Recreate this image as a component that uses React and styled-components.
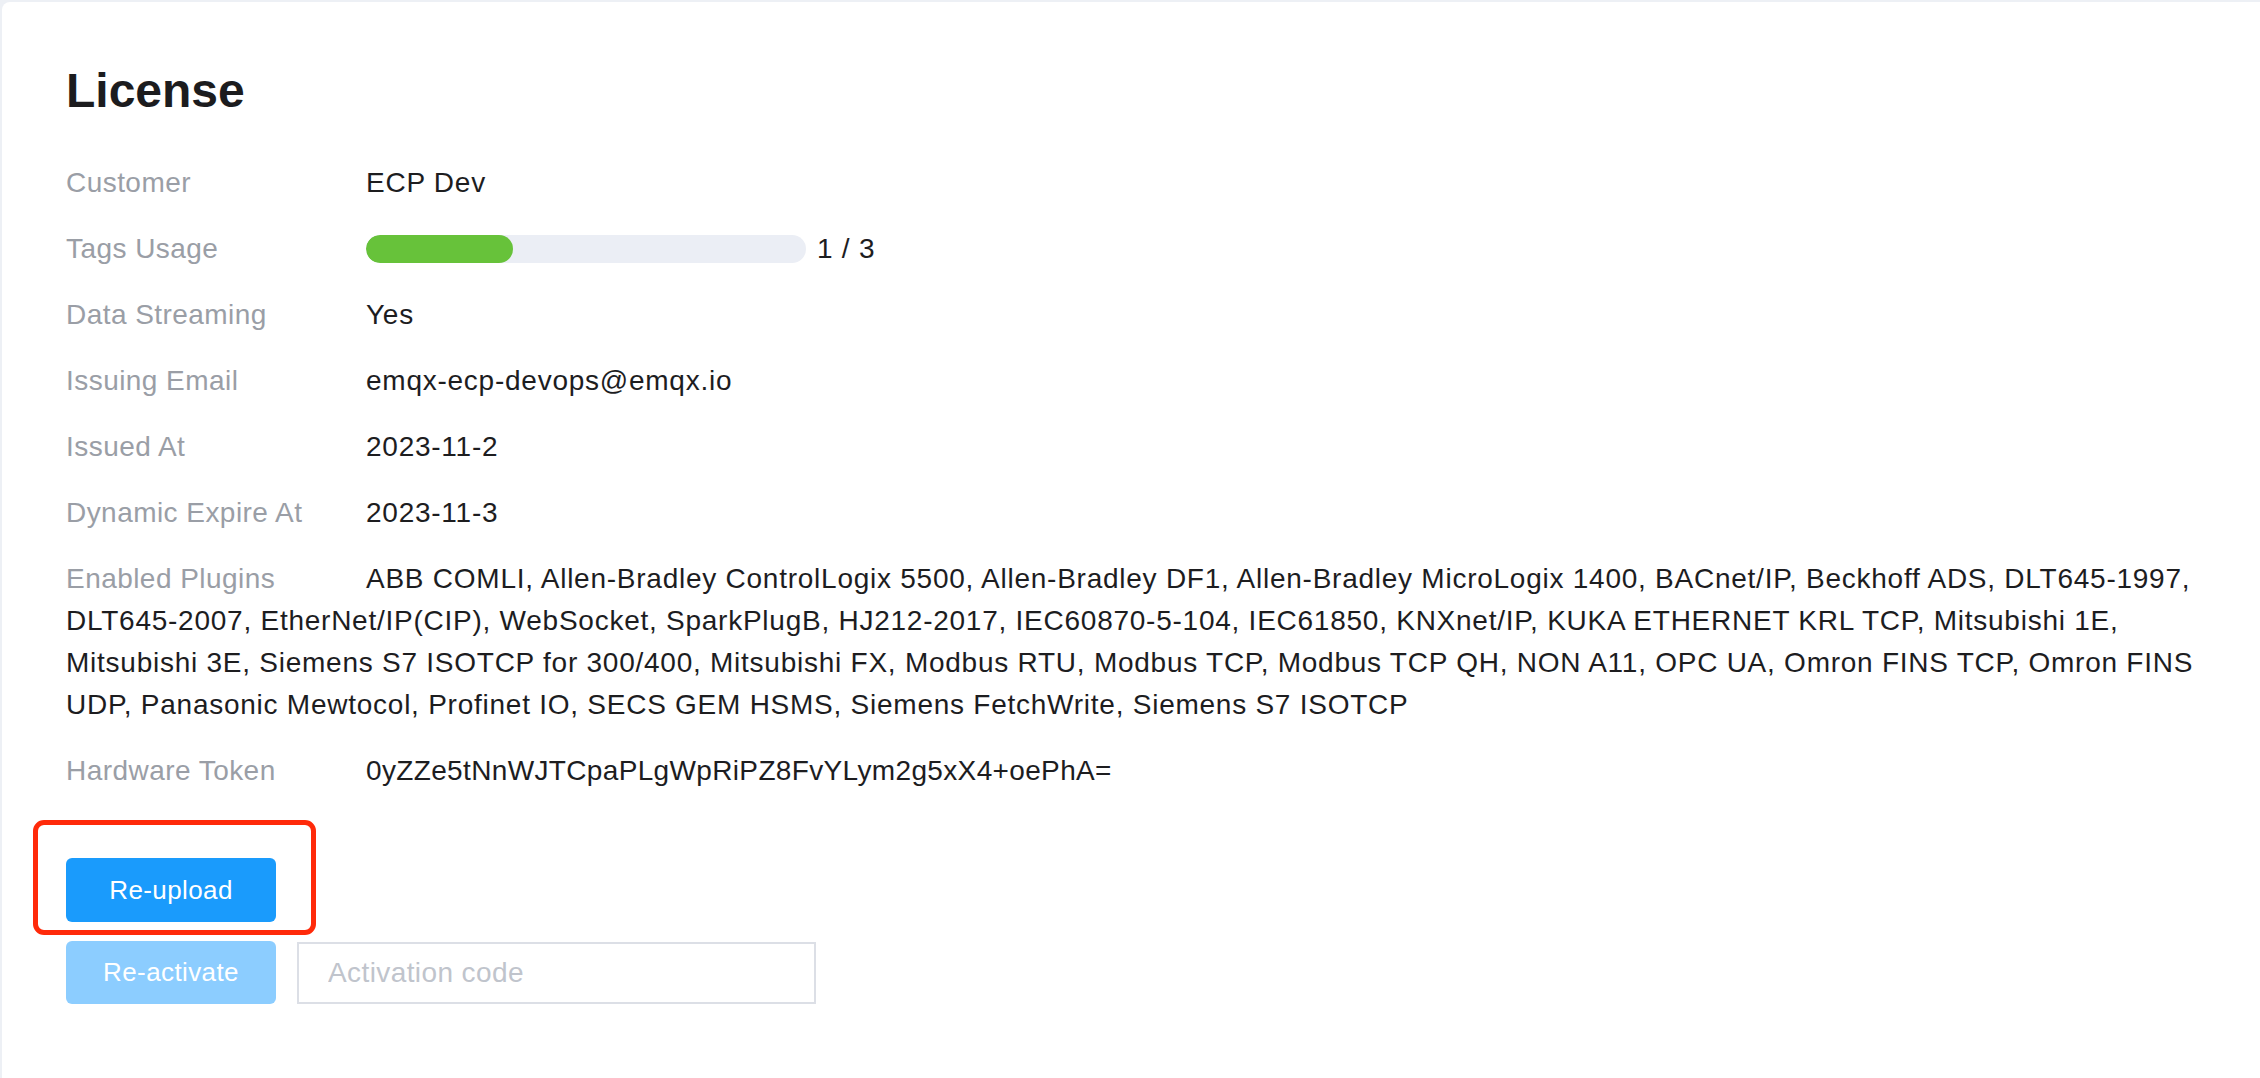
import React from 'react';
import styled, { createGlobalStyle } from 'styled-components';

const GlobalStyle = createGlobalStyle`
  html, body {
    margin: 0;
    padding: 0;
    background: #edf0f5;
  }
  body {
    font-family: "Liberation Sans", Arial, "Noto Sans CJK SC", sans-serif;
    color: #1d1d1f;
  }
  * {
    box-sizing: border-box;
  }
`;

const Page = styled.div`
  min-height: 100vh;
  padding: 2px 0 0 2px;
  display: flex;
`;

const Card = styled.section`
  flex: 1;
  background: #fff;
  border-radius: 8px 0 0 0;
  padding: 53px 45px 60px 64px;
`;

const Title = styled.h1`
  margin: 0 0 35px;
  font-size: 48px;
  line-height: 72px;
  font-weight: 600;
  color: #1c1c1e;
`;

const InfoList = styled.div`
  font-size: 28px;
  line-height: 42px;
`;

// label sits inline so long values wrap back under it
const InfoRow = styled.div`
  margin-bottom: 24px;
  display: ${(p) => (p.$flex ? 'flex' : 'block')};
  align-items: center;

  &:last-child {
    margin-bottom: 0;
  }
`;

const Label = styled.span`
  display: inline-block;
  width: 300px;
  flex: none;
  color: #9a9ea6;
  letter-spacing: 0.45px;
`;

const Value = styled.span`
  color: #1d1d1f;
  letter-spacing: ${(p) => (p.$tight ? 0.35 : 0.75)}px;
`;

const Track = styled.div`
  width: 440px;
  height: 28px;
  margin-right: 11px;
  border-radius: 14px;
  background: #ebeef5;
  overflow: hidden;
`;

const Fill = styled.div`
  height: 100%;
  border-radius: 14px;
  background: #67c23a;
`;

const Actions = styled.div`
  margin-top: 66px;
  display: flex;
  flex-direction: column;
  align-items: flex-start;
  gap: 19px;
`;

const Row = styled.div`
  display: flex;
  align-items: center;
  gap: 21px;
`;

const Highlight = styled.div`
  position: relative;
`;

const Marker = styled.span`
  position: absolute;
  top: -38px;
  left: -33px;
  right: -40px;
  bottom: -13px;
  border: 5px solid #ff2a0a;
  border-radius: 11px;
  pointer-events: none;
`;

const Button = styled.button`
  width: 210px;
  height: ${(p) => (p.$tall ? 64 : 63)}px;
  border: none;
  border-radius: 6px;
  background: ${(p) => (p.disabled ? '#8ccdff' : '#1a9bfc')};
  color: #fff;
  font-family: inherit;
  font-size: 26px;
  letter-spacing: 0.4px;
  cursor: ${(p) => (p.disabled ? 'not-allowed' : 'pointer')};
`;

const CodeInput = styled.input`
  width: 519px;
  height: 62px;
  border: 2px solid #dcdfe6;
  border-radius: 0;
  padding: 0 29px;
  font-family: inherit;
  font-size: 28px;
  letter-spacing: 0.4px;
  color: #1d1d1f;
  outline: none;

  &::placeholder {
    color: #c0c4cc;
  }
`;

const plugins = [
  'ABB COMLI', 'Allen-Bradley ControlLogix 5500', 'Allen-Bradley DF1',
  'Allen-Bradley MicroLogix 1400', 'BACnet/IP', 'Beckhoff ADS', 'DLT645-1997',
  'DLT645-2007', 'EtherNet/IP(CIP)', 'WebSocket', 'SparkPlugB', 'HJ212-2017',
  'IEC60870-5-104', 'IEC61850', 'KNXnet/IP', 'KUKA ETHERNET KRL TCP', 'Mitsubishi 1E',
  'Mitsubishi 3E', 'Siemens S7 ISOTCP for 300/400', 'Mitsubishi FX', 'Modbus RTU',
  'Modbus TCP', 'Modbus TCP QH', 'NON A11', 'OPC UA', 'Omron FINS TCP', 'Omron FINS UDP',
  'Panasonic Mewtocol', 'Profinet IO', 'SECS GEM HSMS', 'Siemens FetchWrite', 'Siemens S7 ISOTCP',
];

const usage = { used: 1, total: 3 };

export default function App() {
  return (
    <Page>
      <GlobalStyle />
      <Card>
        <Title>License</Title>
        <InfoList>
          <InfoRow>
            <Label>Customer</Label>
            <Value>ECP Dev</Value>
          </InfoRow>

          <InfoRow $flex>
            <Label>Tags Usage</Label>
            <Track>
              <Fill style={{ width: `${(usage.used / usage.total) * 100}%` }} />
            </Track>
            <Value>
              {usage.used} / {usage.total}
            </Value>
          </InfoRow>

          <InfoRow>
            <Label>Data Streaming</Label>
            <Value>Yes</Value>
          </InfoRow>

          <InfoRow>
            <Label>Issuing Email</Label>
            <Value>emqx-ecp-devops@emqx.io</Value>
          </InfoRow>

          <InfoRow>
            <Label>Issued At</Label>
            <Value>2023-11-2</Value>
          </InfoRow>

          <InfoRow>
            <Label>Dynamic Expire At</Label>
            <Value>2023-11-3</Value>
          </InfoRow>

          <InfoRow>
            <Label>Enabled Plugins</Label>
            <Value>{plugins.join(', ')}</Value>
          </InfoRow>

          <InfoRow>
            <Label>Hardware Token</Label>
            <Value $tight>0yZZe5tNnWJTCpaPLgWpRiPZ8FvYLym2g5xX4+oePhA=</Value>
          </InfoRow>
        </InfoList>

        <Actions>
          <Highlight>
            <Button $tall>Re-upload</Button>
            <Marker />
          </Highlight>
          <Row>
            <Button disabled>Re-activate</Button>
            <CodeInput placeholder="Activation code" />
          </Row>
        </Actions>
      </Card>
    </Page>
  );
}
